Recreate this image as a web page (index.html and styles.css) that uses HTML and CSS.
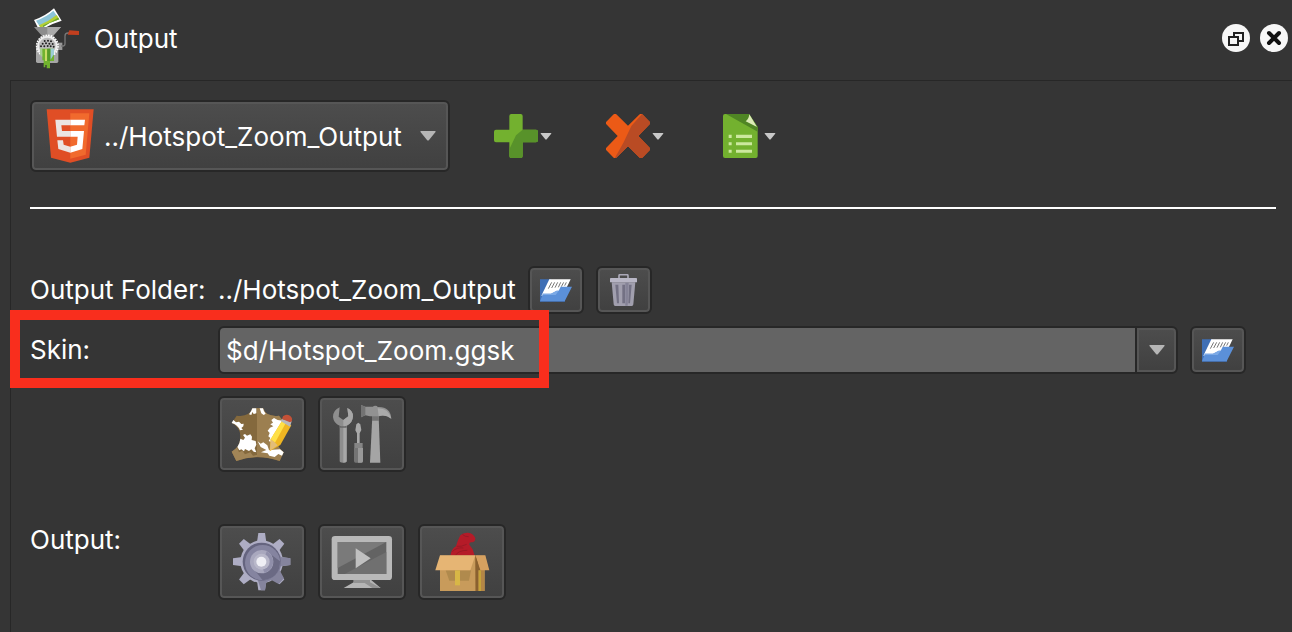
FILE: index.html
```
<!DOCTYPE html>
<html lang="en">
<head>
  <meta charset="UTF-8">
  <meta name="viewport" content="width=device-width, initial-scale=1.0">
  <title>Output</title>
  <link rel="stylesheet" href="styles.css">
</head>
<body>
  <!-- Shared shapes -->
  <svg class="defs" width="0" height="0" aria-hidden="true">
    <symbol id="arrow" viewBox="0 0 16 10">
      <path d="M1 0H15Q16 0 15.500 1L9 9Q8 10 7 9L.5 1Q0 0 1 0Z" fill="currentColor"/>
    </symbol>
    <symbol id="folder" viewBox="90 70 96 69">
      <path d="M90 71H122L128 78H165V138H90Z" fill="#3f6fb5"/>
      <path d="M118 71H182L158 120H94Z" fill="#fff"/>
      <path d="M125 80L115 99M134 80L125 97M143 80L135 96M152 80L145 95M161 80L154 93M169 80L164 90" stroke="#777" stroke-width="3"/>
      <path d="M90 137L99 114H123L140 105H146L152 93H186L164 137Z" fill="#5b90d9"/>
      <path d="M99 114H123L140 105H146L137 118H97Z" fill="#7ba9e6"/>
    </symbol>
  </svg>

  <div class="dock">
    <div class="header">
      <svg width="48" height="63" viewBox="99 21 144 189" aria-hidden="true">
        <path d="M105 60Q140 48 165 25L188 62Q160 70 132 86L119 88Z" fill="#fff"/>
        <path d="M111 62Q142 51 163 32L181 58Q154 66 125 83Z" fill="#8cc4d8"/>
        <path d="M120 76Q148 65 173 45L181 58Q154 66 125 83Z" fill="#b6cf34"/>
        <path d="M133 76Q158 66 177 53L181 58Q154 66 130 83Z" fill="#6da52d"/>
        <path d="M105 81H186L162 108V118H129V108Z" fill="#8d8d8d"/>
        <path d="M145 81H186L162 108H145Z" fill="#aaa"/>
        <path d="M111 140H178V184Q178 189 173 189H116Q111 189 111 184Z" fill="#a5a5a5"/>
        <path d="M176 128H190V150H176Z" fill="#999"/>
        <path d="M186 138H193Q198 138 198 130V108Q198 99 207 99H214" fill="none" stroke="#777" stroke-width="4"/>
        <path d="M211 91L240 93V105L206 104Z" fill="#c13f1f"/>
        <circle cx="145" cy="138" r="32" fill="none" stroke="#fff" stroke-width="5" stroke-dasharray="5 3"/>
        <circle cx="145" cy="138" r="31" fill="#eee"/>
        <circle cx="145" cy="138" r="25" fill="#bcbcbc"/>
        <g fill="#222">
          <circle cx="137" cy="123" r="3"/><circle cx="147" cy="122" r="3"/><circle cx="156" cy="124" r="3"/>
          <circle cx="131" cy="131" r="3"/><circle cx="141" cy="130" r="3"/><circle cx="151" cy="131" r="3"/><circle cx="161" cy="132" r="3"/>
          <circle cx="126" cy="139" r="3"/><circle cx="136" cy="139" r="3"/><circle cx="146" cy="138" r="3"/><circle cx="155" cy="139" r="3"/><circle cx="164" cy="140" r="3"/>
        </g>
        <path d="M123 145H131V173L123 164Z" fill="#a7cf91"/>
        <path d="M130 146H165V183H153V205H143V195H139V202H134V181H130Z" fill="#71b32e"/>
        <path d="M138 148H144V183H138Z" fill="#c8dc65"/>
        <path d="M154 146H165V163L154 180Z" fill="#9ccdd5"/>
        <path d="M145 146H154V183H145Z" fill="#579b28"/>
      </svg>
      <h1 class="title">Output</h1>
      <div class="window-buttons">
        <button class="round-button" type="button" aria-label="Float">
          <svg width="28" height="28" viewBox="0 0 28 28">
            <rect x="12" y="9" width="9" height="8" fill="none" stroke="#222" stroke-width="2"/>
            <rect x="7" y="13" width="9" height="8" fill="#f7f7f7" stroke="#222" stroke-width="2"/>
          </svg>
        </button>
        <button class="round-button" type="button" aria-label="Close">
          <svg width="28" height="28" viewBox="0 0 28 28">
            <path d="M9 9L19 19M19 9L9 19" stroke="#111" stroke-width="4" stroke-linecap="round"/>
          </svg>
        </button>
      </div>
    </div>

    <div class="panel">
      <div class="toolbar">
        <div class="format">
          <svg class="format-logo" width="48" height="54" viewBox="78 56 144 162" aria-hidden="true">
            <path d="M80 57H221L208 202L151 217L93 202Z" fill="#e04e25"/>
            <path d="M151 69H208L197 193L151 205Z" fill="#f16a2d"/>
            <path d="M106 88H151V105H124L126 122H151V139H111ZM112 150H129L131 163L151 169V187L115 176Z" fill="#ebe4e2"/>
            <path d="M151 88H195L193 105H151ZM151 122H192L187 176L151 187V169L171 163L173 139H151Z" fill="#fff"/>
          </svg>
          <select class="format-select" aria-label="Output format">
            <option>../Hotspot_Zoom_Output</option>
          </select>
          <svg class="format-arrow" width="16" height="10"><use href="#arrow"/></svg>
        </div>
        <div class="tools">
          <button class="tool" type="button" aria-label="Add output">
            <svg width="44" height="44" viewBox="42 72 132 132">
              <path d="M94 72H122Q128 72 128 78V119H168Q174 119 174 125V151Q174 157 168 157H128V198Q128 204 122 204H94Q88 204 88 198V157H48Q42 157 42 151V125Q42 119 48 119H88V78Q88 72 94 72Z" fill="#73b12f"/>
              <path d="M128 119H168Q174 119 174 125V151Q174 157 168 157H128V198Q128 204 122 204H94Q88 204 88 198V178L108 136Z" fill="#58922a"/>
            </svg>
            <svg width="12" height="7"><use href="#arrow"/></svg>
          </button>
          <button class="tool" type="button" aria-label="Remove output">
            <svg width="44" height="44" viewBox="378 72 132 132">
              <path d="M409 73L444 107L479 73Q483 70 487 73L509 95Q512 99 509 103L475 138L509 173Q512 177 509 181L487 203Q483 206 479 203L444 169L409 203Q405 206 401 203L379 181Q376 177 379 173L413 138L379 103Q376 99 379 95L401 73Q405 70 409 73Z" fill="#ec5a16"/>
              <path d="M486 72L509 95Q512 99 509 103L475 138L509 173Q512 177 509 181L487 203Q483 206 479 203L444 169L409 203L404 205L431 157L454 108Z" fill="#b94b24"/>
            </svg>
            <svg width="12" height="7"><use href="#arrow"/></svg>
          </button>
          <button class="tool" type="button" aria-label="Output presets">
            <svg width="44" height="44" viewBox="714 72 132 132">
              <path d="M735 72H807L833 111V198Q833 204 827 204H735Q729 204 729 198V78Q729 72 735 72Z" fill="#73b12f"/>
              <path d="M738 72H807L833 111V125Z" fill="#4f8524"/>
              <path d="M808 73L831 111L797 94Q806 88 808 73Z" fill="#dcebb7"/>
              <path d="M746 134H755V144H746ZM768 134H816V144H768ZM746 157H755V166H746ZM768 157H816V166H768ZM746 179H755V188H746ZM768 179H816V188H768Z" fill="#cce89e"/>
            </svg>
            <svg width="12" height="7"><use href="#arrow"/></svg>
          </button>
        </div>
      </div>

      <hr class="divider">

      <div class="form">
        <div class="row">
          <span class="label">Output Folder:</span>
          <span class="path">../Hotspot_Zoom_Output</span>
          <button class="button small" type="button" aria-label="Choose output folder">
            <svg width="32" height="23"><use href="#folder"/></svg>
          </button>
          <button class="button small" type="button" aria-label="Clear output folder">
            <svg width="27" height="32" viewBox="303 57 81 96">
              <path d="M330 70V62Q330 59 334 59H353Q357 59 357 62V70" fill="none" stroke="#aaa8b7" stroke-width="5"/>
              <path d="M308 82H379L373 148Q373 153 368 153H319Q314 153 314 148Z" fill="#a19fae"/>
              <path d="M305 69H382Q384 69 384 71V82H303V71Q303 69 305 69Z" fill="#b8b6c5"/>
              <path d="M319 89H328L330 145H324ZM340 89H348V145H340ZM360 89H368L363 145H358Z" fill="#737184"/>
              <path d="M349 83H359L356 152H349Z" fill="#858397"/>
            </svg>
          </button>
        </div>

        <div class="row skin-row">
          <label class="label" for="skin">Skin:</label>
          <div class="combo">
            <input class="combo-input" id="skin" type="text" value="$d/Hotspot_Zoom.ggsk">
            <button class="combo-button" type="button" aria-label="Show skins">
              <svg width="16" height="10"><use href="#arrow"/></svg>
            </button>
          </div>
          <button class="button small" type="button" aria-label="Choose skin file">
            <svg width="32" height="23"><use href="#folder"/></svg>
          </button>
          <div class="highlight"></div>
        </div>

        <div class="row icons-row">
          <button class="button large" type="button" aria-label="Edit skin">
            <svg width="62" height="55" viewBox="30 24 186 165">
              <path d="M47 50Q84 55 94 28H126Q136 55 174 50L188 68Q160 84 162 110Q164 140 188 160L176 186Q110 163 46 186L32 158Q58 145 58 112Q58 84 32 72Z" fill="#84693d"/>
              <path d="M108 28H126Q136 55 174 50L188 68Q160 84 162 110Q164 140 188 160L176 186Q142 174 108 174Z" fill="#9c7f50"/>
              <path d="M32 158Q42 152 48 145L54 160L64 155L72 166L88 160L96 170L108 168V174Q74 176 46 186Z" fill="#a18557"/>
              <path d="M94 28H106V43L98 45L94 39L91 48L84 46Q91 38 94 28ZM116 28H126Q128 39 134 44L128 48L121 43Z" fill="#fff"/>
              <path d="M37 63L45 70L54 68L61 75L68 74L67 82L61 87L66 92L57 94Q50 77 32 72Z" fill="#fff"/>
              <path d="M66 108L72 105L78 110L88 106L93 113L92 123L104 126L106 137L101 148L106 160L98 158L91 151L84 156L72 150L69 157L61 151L55 154L49 144Q57 132 58 119L67 123L72 116Z" fill="#fff"/>
              <path d="M151 63L159 57L170 63L185 65L178 78L152 130L143 126L148 117L142 112L146 102L140 95L147 86L157 82L148 76L156 71Z" fill="#fff"/>
              <path d="M110 127L119 134L127 130L139 139L144 153L177 151L188 160L183 170L172 165L161 174L145 170L140 163L120 160L136 153L119 144Z" fill="#fff"/>
              <path d="M185 62L211 79L178 138L146 157L149 121Z" fill="#efb622"/>
              <path d="M185 62L196 69L162 131L149 121Z" fill="#ffe047"/>
              <path d="M149 121L160 129L170 139L147 155Z" fill="#e2bd79"/>
              <path d="M183 60L212 67L207 83L179 66Z" fill="#b7b9bb"/>
              <path d="M186 52Q195 43 207 50Q216 57 212 67L207 70L183 60Z" fill="#c45137"/>
            </svg>
          </button>
          <button class="button large" type="button" aria-label="Skin settings">
            <svg width="60" height="60" viewBox="366 42 180 180">
              <path d="M389 52Q369 61 369 81Q371 100 389 107V213Q389 218 399 218Q410 218 410 213V107Q428 99 429 79Q429 62 412 54L415 79L400 90L386 80Z" fill="#8e8e8e"/>
              <path d="M400 90L415 79L412 54Q429 62 429 79Q428 99 410 107V213Q410 218 400 218Z" fill="#a7a7a7"/>
              <path d="M389 107Q399 111 410 107V113H389Z" fill="#686868"/>
              <path d="M439 103L445 98L451 103L454 120L449 130V159H441V130L436 121Z" fill="#aaa"/>
              <path d="M433 159H458V175H433Z" fill="#858585"/>
              <path d="M432 174H459V213Q459 218 454 218H437Q432 218 432 213Z" fill="#747474"/>
              <path d="M444 174H459V213Q459 218 454 218H444Z" fill="#999"/>
              <path d="M487 79H506L511 218H480Z" fill="#a5a5a5"/>
              <path d="M486 78H506L507 92H486Z" fill="#747474"/>
              <path d="M453 45L466 50H489Q490 47 496 47Q502 47 503 51Q541 49 544 86Q525 72 506 79H480L466 76L453 82Z" fill="#929292"/>
              <path d="M453 45L466 50V76L453 82Z" fill="#737373"/>
              <path d="M503 55Q535 54 544 86Q525 72 506 79Z" fill="#aaa"/>
            </svg>
          </button>
        </div>

        <div class="row output-row">
          <span class="label">Output:</span>
          <button class="button large" type="button" aria-label="Generate output">
            <svg width="60" height="60" viewBox="66 51 180 180">
              <g fill="#aeadc4">
                <circle cx="155" cy="140" r="64"/>
                <g id="teeth">
                  <path d="M145 54H165L169 82H141Z"/>
                  <path d="M145 226H165L169 198H141Z"/>
                  <path d="M69 130V150L97 154V126Z"/>
                  <path d="M241 130V150L213 154V126Z"/>
                </g>
                <use href="#teeth" transform="rotate(45 155 140)"/>
              </g>
              <path d="M136 180L202 107L213 126L241 130V150L213 154L209 166L222 190L206 207L184 195L169 202L165 226H153L145 200Z" fill="#85849d"/>
              <circle cx="155" cy="140" r="57" fill="#65647f"/>
              <circle cx="158" cy="143" r="53" fill="#8584a0"/>
              <path d="M125 154L184 119L210 139Q210 190 158 196Z" fill="#6b6a84"/>
              <circle cx="155" cy="140" r="35" fill="#a9a8be"/>
              <path d="M170 109Q191 122 189 145Q186 166 164 174L155 154Z" fill="#908faa"/>
              <circle cx="155" cy="140" r="24" fill="#b9b8ca"/>
              <circle cx="154" cy="140" r="15" fill="#efeff5"/>
            </svg>
          </button>
          <button class="button large" type="button" aria-label="Preview output">
            <svg width="62" height="60" viewBox="366 54 186 180">
              <path d="M434 195H483L515 222H404L434 205Z" fill="#b5b5b5"/>
              <path d="M434 198H483V205L515 222H490L467 207H434Z" fill="#929292"/>
              <rect x="368" y="66" width="181" height="132" rx="10" fill="#b9b9b9"/>
              <rect x="386" y="84" width="146" height="96" fill="#636363"/>
              <path d="M386 84H532L386 162Z" fill="#7a7a7a"/>
              <path d="M532 114V180H407Z" fill="#707070"/>
              <path d="M440 103L485 133L440 163Z" fill="#c0c0c0"/>
            </svg>
          </button>
          <button class="button large" type="button" aria-label="Create package">
            <svg width="55" height="60" viewBox="675 53 165 180">
              <path d="M721 124Q724 104 738 96Q743 78 751 63Q759 54 774 55Q791 57 796 72Q796 84 785 84Q777 83 778 91L788 105L794 124Z" fill="#b51b28"/>
              <path d="M740 96Q754 98 770 90M727 112Q740 98 760 101M736 124Q744 108 772 108M757 60Q765 68 776 67" fill="none" stroke="#8d1822" stroke-width="2"/>
              <path d="M690 124H824V230H690Z" fill="#c89b5b"/>
              <path d="M797 124H805V230H797Z" fill="#91652d"/>
              <path d="M805 160H823V230H805Z" fill="#b48645"/>
              <path d="M707 168H783L777 199H718Z" fill="#b08a4d"/>
              <path d="M690 123H796L781 168H676Z" fill="#e6b574"/>
              <path d="M796 123H826L838 168H811Z" fill="#d6a160"/>
              <path d="M796 123L811 168H805V230H797Z" fill="#8a6130"/>
              <path d="M735 168H750V213H735Z" fill="#d8b746"/>
              <path d="M806 168H813V230H806Z" fill="#c5a33a"/>
            </svg>
          </button>
        </div>
      </div>
    </div>
  </div>
</body>
</html>
```
FILE: styles.css
```
* {
  box-sizing: border-box;
}

body {
  margin: 0;
  background-color: #353535;
  color: #fff;
  font-family: Inter, "Liberation Sans", sans-serif;
  font-size: 26px;
  line-height: 32px;
}

button,
input,
select {
  margin: 0;
  padding: 0;
  font: inherit;
  color: inherit;
}

svg {
  display: block;
  flex: none;
}

.defs {
  position: absolute;
}

.dock {
  display: flex;
  flex-direction: column;
  min-height: 100vh;
}

.header {
  display: flex;
  align-items: center;
  height: 80px;
  padding: 0 4px 4px 32px;
  gap: 14px;
}

.title {
  margin: 0;
  padding-top: 2px;
  font-size: 26px;
  font-weight: 400;
}

.window-buttons {
  display: flex;
  gap: 10px;
  margin-left: auto;
}

.round-button {
  width: 28px;
  height: 28px;
  border: none;
  border-radius: 50%;
  background-color: #f7f7f7;
}

.panel {
  flex: 1;
  margin-left: 10px;
  padding: 19px 16px 32px 19px;
  border-top: 1px solid #272727;
  border-left: 1px solid #272727;
}

.toolbar {
  display: flex;
  align-items: center;
  gap: 44px;
}

/* Raised controls: dark outline with a lighter bevel inside */
.format-select,
.button,
.combo-button {
  border: 2px solid #272727;
  border-radius: 6px;
  background: linear-gradient(#4d4d4d, #404040);
  box-shadow: inset 0 0 0 2px #565656;
}

.format {
  position: relative;
}

.format-select {
  display: block;
  width: 420px;
  height: 72px;
  padding-top: 2px;
  padding-left: 72px;
  appearance: none;
}

.format-logo,
.format-arrow {
  position: absolute;
  pointer-events: none;
}

.format-logo {
  left: 16px;
  top: 9px;
}

.format-arrow {
  right: 14px;
  top: 31px;
  color: #b5b5b5;
}

.tools {
  display: flex;
  gap: 54px;
}

.tool {
  display: flex;
  align-items: center;
  gap: 2px;
  border: none;
  background: none;
  color: #c8c8c8;
}

.divider {
  height: 2px;
  margin: 35px 0 57px;
  border: none;
  background-color: #fff;
}

.form {
  padding-right: 30px;
}

.row {
  display: flex;
  align-items: center;
  gap: 12px;
}

.label {
  flex: none;
  width: 176px;
  white-space: nowrap;
}

.button {
  display: flex;
  flex: none;
  align-items: center;
  justify-content: center;
}

.small {
  width: 56px;
  height: 48px;
}

.large {
  width: 88px;
  height: 76px;
}

.skin-row {
  position: relative;
  margin-top: 12px;
}

.combo {
  display: flex;
  flex: 1;
  min-width: 0;
}

.combo-input {
  flex: 1;
  min-width: 0;
  height: 48px;
  padding: 0 6px;
  border: 2px solid #272727;
  border-right-width: 1px;
  border-radius: 6px 0 0 6px;
  outline: none;
  background-color: #646464;
}

.combo-button {
  display: flex;
  align-items: center;
  justify-content: center;
  width: 42px;
  border-left-width: 1px;
  border-radius: 0 6px 6px 0;
  color: #b5b5b5;
}

.highlight {
  position: absolute;
  left: -20px;
  top: -16px;
  width: 539px;
  height: 78px;
  border: 10px solid #f92e1d;
  pointer-events: none;
}

.icons-row {
  margin-top: 22px;
  padding-left: 188px;
}

.output-row {
  align-items: flex-start;
  margin-top: 52px;
}
```
